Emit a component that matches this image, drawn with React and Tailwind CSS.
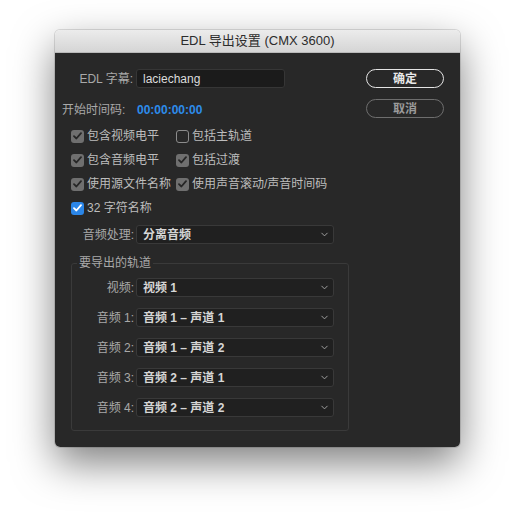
import { ChevronDown } from 'lucide-react';

const font = { fontFamily: '"Liberation Sans", "Noto Sans CJK SC", sans-serif' };

function Check({ state }) {
  if (state === 'blue') {
    return (
      <span className="w-[13px] h-[13px] rounded-[3px] bg-[#2b86e8] flex items-center justify-center">
        <svg width="9" height="8" viewBox="0 0 9 8">
          <path d="M1 4.2 L3.4 6.5 L8 1.2" fill="none" stroke="#fff" strokeWidth="1.8" strokeLinecap="round" strokeLinejoin="round" />
        </svg>
      </span>
    );
  }
  if (state === 'on') {
    return (
      <span className="w-[13px] h-[13px] rounded-[3px] bg-[#6f6f6f] flex items-center justify-center">
        <svg width="9" height="8" viewBox="0 0 9 8">
          <path d="M1 4.2 L3.4 6.5 L8 1.2" fill="none" stroke="#262626" strokeWidth="1.8" strokeLinecap="round" strokeLinejoin="round" />
        </svg>
      </span>
    );
  }
  return <span className="w-[13px] h-[13px] rounded-[3px] border-[1.5px] border-[#8c8c8c]" />;
}

function CheckItem({ state, label, width }) {
  return (
    <div className={`flex items-center gap-[3px] ${width}`}>
      <Check state={state} />
      <span className="text-[12px] text-[#bdbdbd]">{label}</span>
    </div>
  );
}

function Select({ value }) {
  return (
    <div className="w-[198px] h-[19px] bg-[#202020] border border-[#393939] rounded-[3px] flex items-center justify-between pl-[6px] pr-[3px]">
      <span className="text-[12px] text-[#d6d6d6] font-semibold">{value}</span>
      <ChevronDown className="w-[11px] h-[11px] text-[#a9a9a9]" strokeWidth={2} />
    </div>
  );
}

const tracks = [
  ['视频:', '视频 1'],
  ['音频 1:', '音频 1 – 声道 1'],
  ['音频 2:', '音频 1 – 声道 2'],
  ['音频 3:', '音频 2 – 声道 1'],
  ['音频 4:', '音频 2 – 声道 2'],
];

export default function App() {
  return (
    <div className="w-[516px] h-[527px] bg-white pt-[30px] pl-[55px]" style={font}>
      <div className="w-[405px] h-[417px] rounded-[5px] overflow-hidden shadow-[0_16px_40px_rgba(0,0,0,0.5),0_0_0_1px_rgba(0,0,0,0.12)] flex flex-col">
        <div className="h-[23px] bg-gradient-to-b from-[#ececec] to-[#d5d5d5] border-b border-[#b9b9b9] flex items-center justify-center text-[13px] text-[#2c2c2c]">
          EDL 导出设置 (CMX 3600)
        </div>
        <div className="flex-1 bg-[#282828] flex pl-[7px]">
          <div className="w-[296px] flex flex-col">
            <div className="mt-[16px] h-[19px] flex items-center">
              <span className="w-[71px] text-right text-[12px] text-[#a9a9a9]">EDL 字幕:</span>
              <div className="ml-[3px] w-[149px] h-[19px] bg-[#1b1b1b] border border-[#363636] rounded-[3px] flex items-center pl-[6px] text-[12px] text-[#dcdcdc]">
                laciechang
              </div>
            </div>
            <div className="mt-[12px] h-[19px] flex items-center">
              <span className="w-[75px] text-[12px] text-[#a9a9a9]">开始时间码:</span>
              <span className="text-[12px] font-bold text-[#2d8ceb]">00:00:00:00</span>
            </div>
            <div className="mt-[5px] pl-[9px] flex flex-col">
              <div className="h-[24px] flex items-center">
                <CheckItem state="on" label="包含视频电平" width="w-[105px]" />
                <CheckItem state="off" label="包括主轨道" />
              </div>
              <div className="h-[24px] flex items-center">
                <CheckItem state="on" label="包含音频电平" width="w-[105px]" />
                <CheckItem state="on" label="包括过渡" />
              </div>
              <div className="h-[24px] flex items-center">
                <CheckItem state="on" label="使用源文件名称" width="w-[105px]" />
                <CheckItem state="on" label="使用声音滚动/声音时间码" />
              </div>
              <div className="h-[24px] flex items-center">
                <CheckItem state="blue" label="32 字符名称" width="w-[105px]" />
              </div>
            </div>
            <div className="mt-[5px] h-[19px] flex items-center">
              <span className="w-[72px] text-right text-[12px] text-[#a9a9a9]">音频处理:</span>
              <div className="ml-[2px]">
                <Select value="分离音频" />
              </div>
            </div>
            <div className="relative mt-[19px] ml-[9px] w-[278px] h-[168px] border border-[#3a3a3a] rounded-[3px] pt-[14px] flex flex-col gap-[11px]">
              <span className="absolute -top-[9px] left-[5px] px-[2px] bg-[#282828] text-[12px] text-[#a9a9a9] leading-[16px]">
                要导出的轨道
              </span>
              {tracks.map(([label, value]) => (
                <div key={label} className="h-[19px] flex items-center">
                  <span className="w-[62px] text-right text-[12px] text-[#a9a9a9]">{label}</span>
                  <div className="ml-[2px]">
                    <Select value={value} />
                  </div>
                </div>
              ))}
            </div>
          </div>
          <div className="ml-[8px] pt-[16px] flex flex-col gap-[11px]">
            <button className="w-[78px] h-[19px] rounded-full border-[1.5px] border-[#e4e4e4] text-[12px] text-[#e8e8e8] font-bold flex items-center justify-center">
              确定
            </button>
            <button className="w-[78px] h-[19px] rounded-full border-[1.5px] border-[#6e6e6e] text-[12px] text-[#9a9a9a] font-bold flex items-center justify-center">
              取消
            </button>
          </div>
        </div>
      </div>
    </div>
  );
}
